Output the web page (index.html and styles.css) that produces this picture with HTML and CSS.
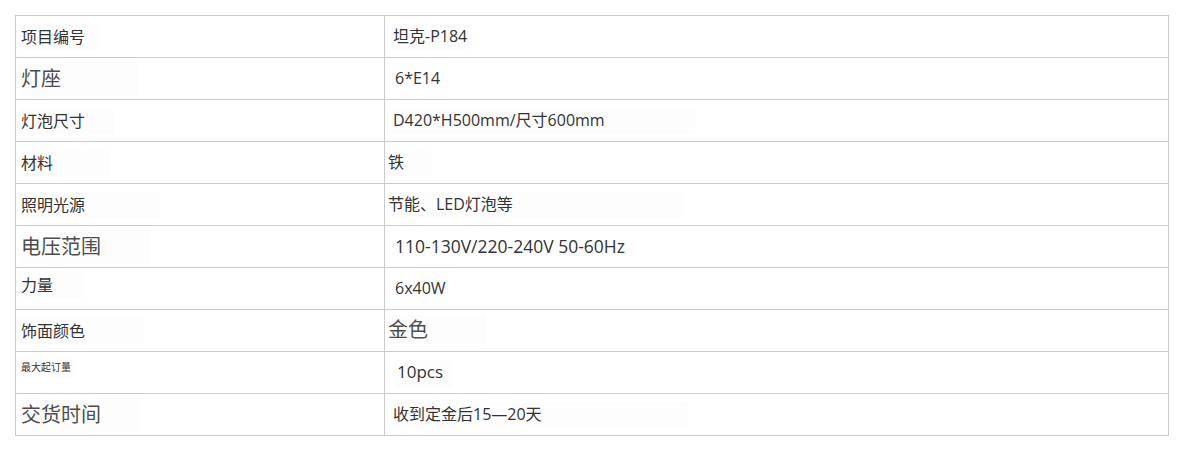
FILE: index.html
```html
<!DOCTYPE html>
<html lang="zh-CN">
<head>
<meta charset="utf-8">
<title>坦克-P184</title>
<link rel="stylesheet" href="styles.css">
</head>
<body>
<table class="spec">
  <colgroup><col class="c-key"><col class="c-val"></colgroup>
  <tbody>
    <tr><td class="k f16"><span class="hl w97">项目编号</span></td><td class="v f16 i1"><span class="hl w468">坦克-P184</span></td></tr>
    <tr><td class="k f20 dim"><span class="hl w135">灯座</span></td><td class="v f16 i2">6*E14</td></tr>
    <tr><td class="k f16"><span class="hl w112">灯泡尺寸</span></td><td class="v f16 i1"><span class="hl w693">D420*H500mm/尺寸600mm</span></td></tr>
    <tr><td class="k f16"><span class="hl w107">材料</span></td><td class="v f16 i0"><span class="hl w430">铁</span></td></tr>
    <tr><td class="k f16"><span class="hl w157">照明光源</span></td><td class="v f16 i0"><span class="hl w682">节能、LED灯泡等</span></td></tr>
    <tr><td class="k f20 dim"><span class="hl w147">电压范围</span></td><td class="v f175 i2">110-130V/220-240V 50-60Hz</td></tr>
    <tr><td class="k f16 up"><span class="hl w82">力量</span></td><td class="v f16 i2">6x40W</td></tr>
    <tr><td class="k f16"><span class="hl w142">饰面颜色</span></td><td class="v f20 i0 dim"><span class="hl w485">金色</span></td></tr>
    <tr><td class="k f10 up2"><span class="hl w73">最大起订量</span></td><td class="v f17 i2"><span class="hl w447">10pcs</span></td></tr>
    <tr><td class="k f20 dim"><span class="hl w138">交货时间</span></td><td class="v f16 i1"><span class="hl w682">收到定金后15—20天</span></td></tr>
  </tbody>
</table>
</body>
</html>
```

FILE: styles.css
```css
html, body {
  margin: 0;
  padding: 0;
  background: #fff;
}
body {
  padding: 15px 0 0 15px;
  font-family: "Open Sans", "Noto Sans CJK SC", sans-serif;
  color: #333;
}
.spec {
  border-collapse: collapse;
  table-layout: fixed;
  width: 1154px;
}
.c-key { width: 369px; }
.spec tr { height: 42px; }
.spec td {
  border: 1px solid #cbcbcb;
  padding: 0 4px;
  vertical-align: middle;
  line-height: 1.3;
  white-space: nowrap;
}
.spec td.k { padding-left: 3px; font-family: "Noto Sans CJK SC", sans-serif; }
.f10 { font-size: 10px; }
.f16 { font-size: 16px; }
.f17 { font-size: 17px; }
.f175 { font-size: 17.5px; }
.f20 { font-size: 20px; }
.dim { color: #4d4d4d; }
.spec td.i0 { padding-left: 1px; }
.spec td.i1 { padding-left: 6px; }
.spec td.i2 { padding-left: 10px; }
.spec td.up { padding-bottom: 8px; }
.spec td.up2 { padding-bottom: 11px; }

/* very faint text highlight boxes visible in the original */
.hl {
  display: inline-block;
  box-sizing: border-box;
  padding: 2px 0 3px 2px;
  background: #fdfdfd;
  box-shadow: 1px 1px 0 rgba(0, 0, 0, 0.012);
}
.w73  { width: 55px; }
.w82  { width: 64px; }
.w97  { width: 79px; }
.w107 { width: 89px; }
.w112 { width: 94px; }
.w135 { width: 117px; }
.w138 { width: 120px; }
.w142 { width: 124px; }
.w147 { width: 129px; }
.w157 { width: 139px; }
.w430 { width: 44px; }
.w447 { width: 56px; }
.w468 { width: 77px; }
.w485 { width: 99px; }
.w682 { width: 296px; }
.w693 { width: 303px; }
```
